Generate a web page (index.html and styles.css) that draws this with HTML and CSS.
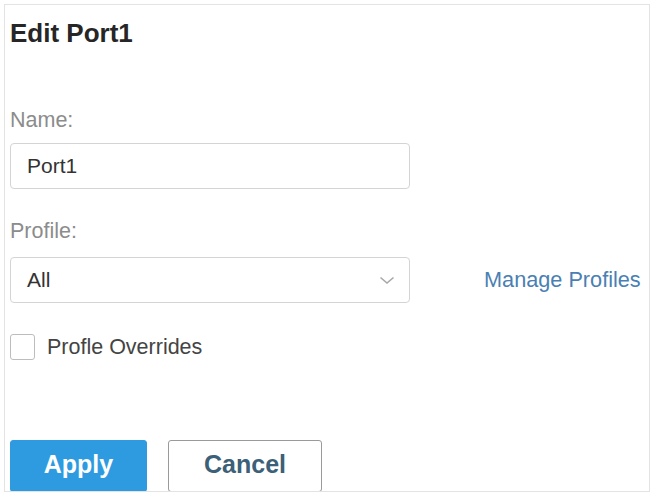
FILE: index.html
```html
<!DOCTYPE html>
<html>
<head>
<meta charset="utf-8">
<link rel="stylesheet" href="styles.css">
</head>
<body>
<div class="panel">
  <h1 class="title">Edit Port1</h1>
  <div class="label label-name">Name:</div>
  <div class="field">Port1</div>
  <div class="label label-profile">Profile:</div>
  <div class="select-row">
    <div class="field select">
      <span>All</span>
      <svg class="chevron" width="16" height="9" viewBox="0 0 16 9"><path d="M1.5 1.5 L8 7 L14.5 1.5" fill="none" stroke="#a8a8a8" stroke-width="1.6"/></svg>
    </div>
    <a class="link">Manage Profiles</a>
  </div>
  <label class="check-row">
    <span class="checkbox"></span>
    <span class="check-label">Profle Overrides</span>
  </label>
  <div class="buttons">
    <button class="btn btn-apply">Apply</button>
    <button class="btn btn-cancel">Cancel</button>
  </div>
</div>
</body>
</html>
```
FILE: styles.css
```css
html, body {
  margin: 0;
  padding: 0;
  background: #ffffff;
  font-family: "Liberation Sans", Arial, sans-serif;
}
.panel {
  box-sizing: border-box;
  margin: 4px 0 0 4px;
  width: 646px;
  height: 488px;
  border: 1px solid #e3e3e3;
  padding: 13px 0 0 5px;
  overflow: hidden;
}
.title {
  margin: 0;
  font-size: 26px;
  line-height: 30px;
  font-weight: bold;
  color: #262626;
}
.label {
  font-size: 21.5px;
  line-height: 24px;
  color: #8c8c8c;
}
.label-name { margin-top: 60px; }
.label-profile { margin-top: 30px; }
.field {
  box-sizing: border-box;
  width: 400px;
  height: 46px;
  margin-top: 11px;
  border: 1px solid #d4d4d4;
  border-radius: 4px;
  padding-left: 16px;
  display: flex;
  align-items: center;
  font-size: 21px;
  color: #333333;
}
.select-row {
  display: flex;
  align-items: center;
  gap: 74px;
  margin-top: 14px;
}
.select-row .field { margin-top: 0; }
.select {
  justify-content: space-between;
  padding-right: 14px;
}
.chevron { display: block; margin-top: 1px; }
.link {
  font-size: 21.7px;
  color: #4a7fb3;
  cursor: pointer;
}
.check-row {
  display: flex;
  align-items: center;
  gap: 12px;
  margin-top: 31px;
}
.checkbox {
  box-sizing: border-box;
  width: 25px;
  height: 26px;
  border: 1px solid #bdbdbd;
  border-radius: 3px;
  background: #fff;
}
.check-label {
  font-size: 21.5px;
  color: #444444;
}
.buttons {
  display: flex;
  gap: 21px;
  margin-top: 80px;
}
.btn {
  box-sizing: border-box;
  height: 52px;
  font-family: "Liberation Sans", Arial, sans-serif;
  font-size: 25px;
  font-weight: bold;
  border-radius: 3px;
  padding: 0 0 4px 0;
}
.btn-apply {
  width: 137px;
  background: #2e9be0;
  color: #ffffff;
  border: 1px solid #2e9be0;
}
.btn-cancel {
  width: 154px;
  background: #ffffff;
  color: #3c6077;
  border: 1px solid #9a9a9a;
}
```
